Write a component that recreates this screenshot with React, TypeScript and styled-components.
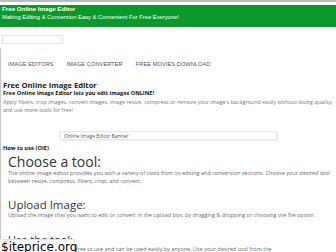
import React from "react";
import styled, { createGlobalStyle } from "styled-components";

const Global = createGlobalStyle`
  html, body { margin: 0; padding: 0; background: #fff; }
  body { font-family: "Open Sans", "Noto Sans", sans-serif; overflow: hidden; }
`;

const Page = styled.div`
  width: 336px;
  height: 252px;
  overflow: hidden;
  border-top: 2px solid #b9bcc4;
  box-sizing: border-box;
  position: relative;
`;

const Header = styled.header`
  margin-top: 3px;
  background: #0a9a2b;
  border-bottom: 1px solid #2e8540;
  box-shadow: 0 1px 2px #d4f2d6;
  height: 22px;
  padding: 0 2px;
  box-sizing: border-box;
  color: #fff;
  font-family: "Liberation Sans", Arial, sans-serif;
`;

const SiteTitle = styled.div`
  font-size: 6.2px;
  font-weight: bold;
  line-height: 8px;
`;

const Tagline = styled.div`
  font-size: 5.8px;
  line-height: 8px;
`;

const Search = styled.div`
  margin: 8px 0 0 2px;
  width: 61px;
  height: 9px;
  border: 1px solid #e2e2e2;
  box-sizing: border-box;
  background: #fff;
`;

const Content = styled.div`
  border-left: 1px solid #c8c8c8;
  margin-top: 4px;
  padding: 12px 0 0 2px;
`;

const Nav = styled.nav`
  display: flex;
  gap: 13px;
  padding-left: 5px;
  height: 8px;
  align-items: center;
`;

const NavItem = styled.span`
  font-family: "Liberation Sans", Arial, sans-serif;
  font-size: 5.6px;
  line-height: 8px;
  color: #555;
  letter-spacing: 0.1px;
`;

const H1 = styled.h1`
  margin: 13px 0 0;
  font-size: 7.6px;
  line-height: 9px;
  font-weight: 700;
  color: #222;
`;

const H2 = styled.h2<{ $gap?: number }>`
  margin: ${(p) => p.$gap ?? 0}px 0 0;
  font-size: 5.6px;
  line-height: 7px;
  font-weight: 700;
  color: #111;
`;

const Lead = styled.p`
  margin: 1px 0 0;
  font-size: 5.4px;
  line-height: 8px;
  color: #777;
  width: 333px;
`;

const BannerRow = styled.div`
  display: flex;
  padding: 17px 0 0 57px;
`;

const Banner = styled.div`
  width: 217px;
  height: 9px;
  border: 1px solid #e6e6e6;
  box-shadow: 1px 1px 1px #eee;
  font-size: 5px;
  line-height: 8px;
  padding-left: 3px;
  color: #555;
  box-sizing: border-box;
`;

const Steps = styled.div`
  padding-left: 5px;
`;

const StepTitle = styled.h3<{ $size: number; $lh: number; $gap: number }>`
  margin: ${(p) => p.$gap}px 0 0;
  font-weight: 400;
  font-size: ${(p) => p.$size}px;
  line-height: ${(p) => p.$lh}px;
  color: #333;
`;

const StepText = styled.p`
  margin: 0;
  font-size: 5.5px;
  line-height: 8px;
  color: #6a6a6a;
  width: 328px;
`;

const Watermark = styled.div`
  position: absolute;
  left: 0;
  bottom: 0;
  width: 75px;
  height: 13px;
  background: #fff;
  border-top: 1px solid #e4e4e4;
  border-right: 1px solid #e4e4e4;
  box-sizing: border-box;
  font-family: "DejaVu Sans", sans-serif;
  font-size: 12px;
  line-height: 14px;
  color: #000;
  padding-left: 1px;
  white-space: nowrap;
`;

export default function App() {
  return (
    <>
      <Global />
      <Page>
        <Header>
          <SiteTitle>Free Online Image Editor</SiteTitle>
          <Tagline>Making Editing &amp; Conversion Easy &amp; Convenient For Free Everyone!</Tagline>
        </Header>
        <Search />
        <Content>
          <Nav>
            <NavItem>IMAGE EDITORS</NavItem>
            <NavItem>IMAGE CONVERTER</NavItem>
            <NavItem>FREE MOVIES DOWNLOAD</NavItem>
          </Nav>
          <H1>Free Online Image Editor</H1>
          <H2>Free Online Image Editor lets you edit images ONLINE!</H2>
          <Lead>
            Apply filters, crop images, convert images, image resize, compress or remove your image's background easily without losing quality, and use more tools for free!
          </Lead>
          <BannerRow>
            <Banner>Online Image Editor Banner</Banner>
          </BannerRow>
          <H2 $gap={5}>How to use (OIE)</H2>
          <Steps>
            <StepTitle $size={14} $lh={15} $gap={2}>Choose a tool:</StepTitle>
            <StepText>
              The online image editor provides you with a variety of tools from its editing and conversion sections. Choose your desired tool between resize, compress, filters, crop, and convert.
            </StepText>
            <StepTitle $size={11.5} $lh={12} $gap={14}>Upload Image:</StepTitle>
            <StepText>
              Upload the image that you want to edit or convert in the upload box, by dragging &amp; dropping or choosing the file option.
            </StepText>
            <StepTitle $size={11} $lh={11} $gap={15}>Use the tool:</StepTitle>
            <StepText>
              The online image editor is free to use and can be used easily by anyone. Use your desired tool from the
            </StepText>
          </Steps>
        </Content>
        <Watermark>$iteprice.org</Watermark>
      </Page>
    </>
  );
}
